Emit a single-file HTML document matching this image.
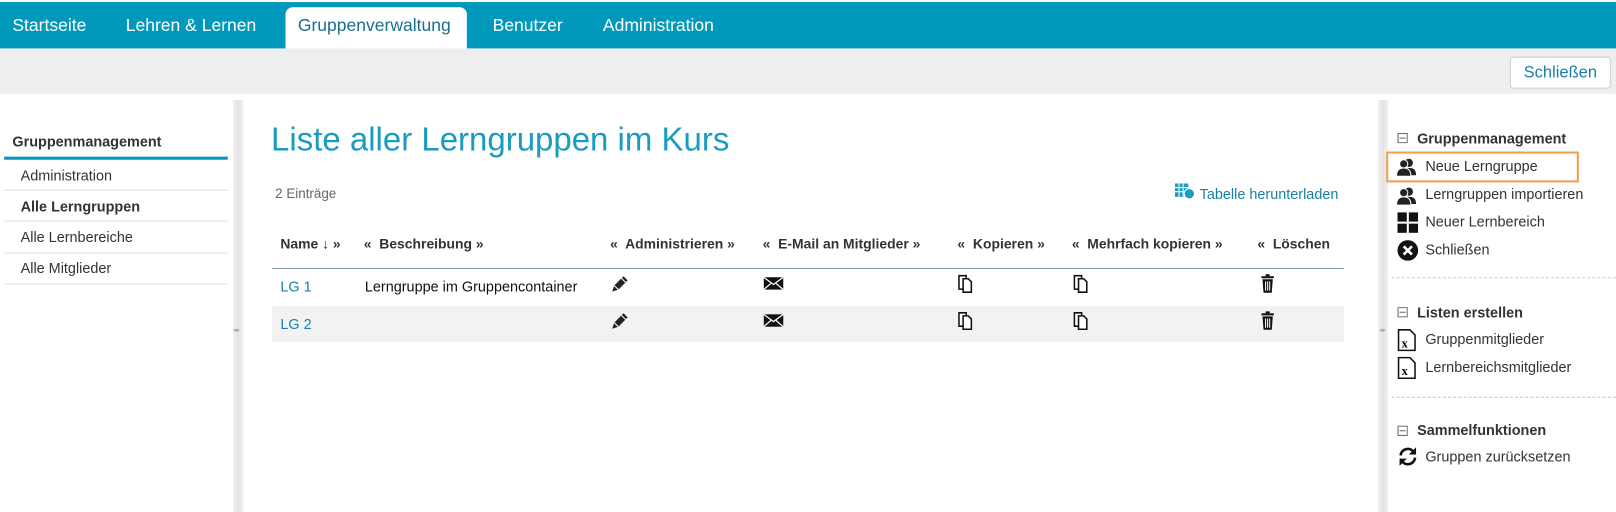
<!DOCTYPE html>
<html><head><meta charset="utf-8"><style>
*{margin:0;padding:0;box-sizing:border-box}
body{width:1616px;height:503px;overflow:hidden;background:#fff;font-family:"Liberation Sans",sans-serif;color:#222;position:relative}
#w{position:absolute;left:0;top:0;width:1568px;height:488px;transform:scale(1.03061);transform-origin:0 0}
.a{position:absolute}
.nav{top:2px;left:0;width:1568px;height:45px;background:#0099bb}
.nav span{position:absolute;top:13px;color:#fff;font-size:17px}
.tab{top:7px;left:277px;width:176px;height:40px;background:#fff;border-radius:7px 7px 0 0}
.gray{top:47px;left:0;width:1568px;height:44px;background:#eeeeee}
.btn{top:55px;left:1465px;width:98px;height:31px;border:1px solid #ccc;border-radius:3px;background:#fff;color:#1a7fa8;font-size:16px;text-align:center;line-height:29px}
.strip{background:linear-gradient(90deg,#f2f2f2,#e4e4e4,#f2f2f2)}
.ls a{position:absolute;left:20px;font-size:14px;color:#333}
.hr{position:absolute;left:4px;width:217px;height:1px;background:#ddd}
.h{position:absolute;top:229px;font-size:13.5px;font-weight:bold;color:#333}
.rs div{position:absolute;font-size:14px;color:#333}
.dash{position:absolute;left:1350px;width:218px;border-top:1px dashed #ccc}
</style></head><body><div id="w">
<div class="a nav">
<span style="left:12px">Startseite</span>
<span style="left:122px">Lehren &amp; Lernen</span>
<span style="left:478px">Benutzer</span>
<span style="left:585px">Administration</span>
</div>
<div class="a tab"><span style="position:absolute;left:12px;top:8px;font-size:17px;color:#1a6f90">Gruppenverwaltung</span></div>
<div class="a gray"></div>
<div class="a btn">Schließen</div>
<div class="a strip" style="left:226px;top:97px;width:10px;height:400px"></div>
<div class="a strip" style="left:1337px;top:97px;width:10px;height:400px"></div>
<div class="a" style="left:226px;top:316px;font-size:7px;color:#aaa">◂▸</div>
<div class="a" style="left:1338px;top:316px;font-size:7px;color:#aaa">◂▸</div>
<div class="ls">
<div class="a" style="left:12px;top:129px;font-size:14px;font-weight:bold;color:#333">Gruppenmanagement</div>
<div class="a" style="left:4px;top:152px;width:217px;height:3px;background:#0099bb"></div>
<a style="top:162px">Administration</a><div class="hr" style="top:184px"></div>
<a style="top:192px;font-weight:bold">Alle Lerngruppen</a><div class="hr" style="top:214px"></div>
<a style="top:222px">Alle Lernbereiche</a><div class="hr" style="top:245px"></div>
<a style="top:252px">Alle Mitglieder</a><div class="hr" style="top:275px"></div>
</div>
<div class="a" style="left:263px;top:117px;font-size:32px;color:#1a9cc1">Liste aller Lerngruppen im Kurs</div>
<div class="a" style="left:267px;top:180px;font-size:13px;color:#666">2 Einträge</div>
<svg class="a" style="left:1140px;top:178px" width="20" height="16"><rect x="0" y="0" width="13" height="13" fill="#1a9cc1"/><path d="M0 4h13M0 8h13M4 0v13M8 0v13" stroke="#fff" stroke-width="1"/><circle cx="14" cy="10" r="5" fill="#1a9cc1" stroke="#fff"/></svg>
<div class="a" style="left:1164px;top:180px;font-size:14px;color:#1a7fa8">Tabelle herunterladen</div>
<div class="h" style="left:272px">Name ↓ »</div>
<div class="h" style="left:353px">«&nbsp; Beschreibung »</div>
<div class="h" style="left:592px">«&nbsp; Administrieren »</div>
<div class="h" style="left:740px">«&nbsp; E-Mail an Mitglieder »</div>
<div class="h" style="left:929px">«&nbsp; Kopieren »</div>
<div class="h" style="left:1040px">«&nbsp; Mehrfach kopieren »</div>
<div class="h" style="left:1220px">«&nbsp; Löschen</div>
<div class="a" style="left:264px;top:260px;width:1040px;height:1px;background:#8a9aac"></div>
<div class="a" style="left:264px;top:297px;width:1040px;height:35px;background:#f2f2f2"></div>
<div class="a" style="left:272px;top:270px;font-size:14px;color:#1a7fa8">LG 1</div>
<div class="a" style="left:354px;top:270px;font-size:14px;color:#111">Lerngruppe im Gruppencontainer</div>
<div class="a" style="left:272px;top:306px;font-size:14px;color:#1a7fa8">LG 2</div>
<svg width="0" height="0" style="position:absolute"><defs>
<g id="pen"><path d="M3 17l2-6 9-9 4 4-9 9z" fill="#222"/><path d="M5 11l4 4M12 4l4 4" stroke="#fff" stroke-width="1"/></g>
<g id="mail"><rect x="0" y="3" width="19" height="12" fill="#111"/><path d="M0 3l9.5 7 9.5-7M0 15l7-6M19 15l-7-6" stroke="#fff" stroke-width="1.2" fill="none"/></g>
<g id="cp"><path d="M1.5 1.5h7v3h-3v10h-4z M5.5 4.5h5l3 3v10h-8z" fill="#fff" stroke="#111" stroke-width="1.5"/></g>
<g id="tr"><rect x="3" y="2" width="12" height="2" fill="#111"/><rect x="7" y="0" width="4" height="2" fill="#111"/><path d="M4 5h10l-1 13h-8z" fill="#111"/><path d="M7 7v9M9 7v9M11 7v9" stroke="#fff" stroke-width="1"/></g>
<g id="ppl"><circle cx="12" cy="6" r="4" fill="#222"/><path d="M5 18c0-6 3-7 7-7s7 1 7 7z" fill="#222"/><circle cx="7" cy="7" r="4" fill="#222" stroke="#fff"/><path d="M0 19c0-6 3-8 7-8s7 2 7 8z" fill="#222" stroke="#fff"/></g>
</defs></svg>
<svg class="a" style="left:591px;top:266px" width="20" height="20"><use href="#pen"/></svg>
<svg class="a" style="left:591px;top:302px" width="20" height="20"><use href="#pen"/></svg>
<svg class="a" style="left:741px;top:266px" width="20" height="20"><use href="#mail"/></svg>
<svg class="a" style="left:741px;top:302px" width="20" height="20"><use href="#mail"/></svg>
<svg class="a" style="left:929px;top:266px" width="20" height="20"><use href="#cp"/></svg>
<svg class="a" style="left:929px;top:302px" width="20" height="20"><use href="#cp"/></svg>
<svg class="a" style="left:1041px;top:266px" width="20" height="20"><use href="#cp"/></svg>
<svg class="a" style="left:1041px;top:302px" width="20" height="20"><use href="#cp"/></svg>
<svg class="a" style="left:1221px;top:266px" width="20" height="20"><use href="#tr"/></svg>
<svg class="a" style="left:1221px;top:302px" width="20" height="20"><use href="#tr"/></svg>
<div class="rs">
<svg class="a" style="left:1356px;top:129px" width="10" height="10"><rect x=".5" y=".5" width="9" height="9" fill="none" stroke="#666"/><path d="M2 5h6" stroke="#666"/></svg>
<div style="left:1375px;top:126px;font-weight:bold">Gruppenmanagement</div>
<div class="a" style="left:1345px;top:147px;width:187px;height:30px;border:2px solid #f0a050"></div>
<svg class="a" style="left:1355px;top:152px" width="20" height="20"><use href="#ppl"/></svg>
<div style="left:1383px;top:153px">Neue Lerngruppe</div>
<svg class="a" style="left:1355px;top:180px" width="20" height="20"><use href="#ppl"/></svg>
<div style="left:1383px;top:180px">Lerngruppen importieren</div>
<svg class="a" style="left:1356px;top:206px" width="20" height="20"><rect x="0" y="0" width="9" height="9" fill="#111"/><rect x="11" y="0" width="9" height="9" fill="#111"/><rect x="0" y="11" width="9" height="9" fill="#111"/><rect x="11" y="11" width="9" height="9" fill="#111"/></svg>
<div style="left:1383px;top:207px">Neuer Lernbereich</div>
<svg class="a" style="left:1356px;top:233px" width="20" height="20"><circle cx="10" cy="10" r="10" fill="#111"/><path d="M6 6l8 8M14 6l-8 8" stroke="#fff" stroke-width="2.5"/></svg>
<div style="left:1383px;top:234px">Schließen</div>
<div class="dash" style="top:269px"></div>
<svg class="a" style="left:1356px;top:298px" width="10" height="10"><rect x=".5" y=".5" width="9" height="9" fill="none" stroke="#666"/><path d="M2 5h6" stroke="#666"/></svg>
<div style="left:1375px;top:295px;font-weight:bold">Listen erstellen</div>
<svg class="a" style="left:1356px;top:319px" width="18" height="22"><path d="M1 1h11l5 5v15h-16z" fill="#fff" stroke="#111" stroke-width="1.5"/><text x="4" y="18" font-size="12" font-weight="bold" font-family="Liberation Serif">x</text></svg>
<div style="left:1383px;top:321px">Gruppenmitglieder</div>
<svg class="a" style="left:1356px;top:346px" width="18" height="22"><path d="M1 1h11l5 5v15h-16z" fill="#fff" stroke="#111" stroke-width="1.5"/><text x="4" y="18" font-size="12" font-weight="bold" font-family="Liberation Serif">x</text></svg>
<div style="left:1383px;top:348px">Lernbereichsmitglieder</div>
<div class="dash" style="top:385px"></div>
<svg class="a" style="left:1356px;top:413px" width="10" height="10"><rect x=".5" y=".5" width="9" height="9" fill="none" stroke="#666"/><path d="M2 5h6" stroke="#666"/></svg>
<div style="left:1375px;top:409px;font-weight:bold">Sammelfunktionen</div>
<svg class="a" style="left:1356px;top:433px" width="20" height="20"><path d="M3 9a7 7 0 0 1 13-3M17 11a7 7 0 0 1-13 3" fill="none" stroke="#111" stroke-width="2.5"/><path d="M18 1v7h-7z M2 19v-7h7z" fill="#111"/></svg>
<div style="left:1383px;top:435px">Gruppen zurücksetzen</div>
</div>
</div></body></html>
